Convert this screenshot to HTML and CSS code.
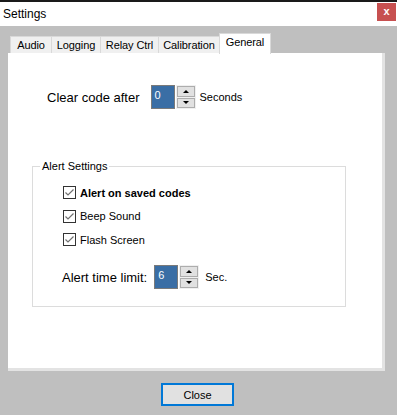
FILE: index.html
```html
<!DOCTYPE html>
<html>
<head>
<meta charset="utf-8">
<link rel="stylesheet" href="styles.css">
</head>
<body>
<div class="window">
  <div class="titlebar">
    <span class="title">Settings</span>
    <span class="close-x">x</span>
  </div>
  <div class="client">
    <div class="tabs">
      <div class="tab tab-audio">Audio</div>
      <div class="tab tab-logging">Logging</div>
      <div class="tab tab-relay">Relay Ctrl</div>
      <div class="tab tab-calib">Calibration</div>
      <div class="tab tab-general active">General</div>
    </div>
    <div class="panel">
      <div class="clear-row">
        <span class="big-label">Clear code after</span>
        <div class="spin">
          <div class="spin-edit">0</div>
          <div class="spin-btns">
            <div class="spin-btn"><span class="tri-up"></span></div>
            <div class="spin-btn"><span class="tri-down"></span></div>
          </div>
        </div>
        <span class="unit unit-seconds">Seconds</span>
      </div>
      <fieldset class="group">
        <legend class="group-title">Alert Settings</legend>
        <div class="checks">
          <label class="check-row"><span class="box"><svg width="11" height="11" viewBox="0 0 11 11"><path d="M1.5 5.5 L4 8 L9.5 2.5" fill="none" stroke="#707070" stroke-width="1.2"/></svg></span><span class="check-label bold">Alert on saved codes</span></label>
          <label class="check-row"><span class="box"><svg width="11" height="11" viewBox="0 0 11 11"><path d="M1.5 5.5 L4 8 L9.5 2.5" fill="none" stroke="#707070" stroke-width="1.2"/></svg></span><span class="check-label">Beep Sound</span></label>
          <label class="check-row"><span class="box"><svg width="11" height="11" viewBox="0 0 11 11"><path d="M1.5 5.5 L4 8 L9.5 2.5" fill="none" stroke="#707070" stroke-width="1.2"/></svg></span><span class="check-label">Flash Screen</span></label>
        </div>
        <div class="limit-row">
          <span class="big-label">Alert time limit:</span>
          <div class="spin">
            <div class="spin-edit">6</div>
            <div class="spin-btns">
              <div class="spin-btn"><span class="tri-up"></span></div>
              <div class="spin-btn"><span class="tri-down"></span></div>
            </div>
          </div>
          <span class="unit unit-sec">Sec.</span>
        </div>
      </fieldset>
    </div>
    <div class="footer">
      <button class="close-btn">Close</button>
    </div>
  </div>
</div>
</body>
</html>
```

FILE: styles.css
```css
* { box-sizing: border-box; }
html, body {
  margin: 0;
  padding: 0;
}
body {
  width: 397px;
  height: 415px;
  overflow: hidden;
  font-family: "Liberation Sans", Arial, sans-serif;
  font-size: 11px;
  color: #000;
  background: #bfbfbf;
}
.window {
  width: 397px;
  height: 415px;
  display: flex;
  flex-direction: column;
}
.titlebar {
  height: 26px;
  border-top: 2px solid #1a1a1a;
  background: #fff;
  display: flex;
  align-items: flex-start;
  justify-content: space-between;
}
.title {
  font-size: 12px;
  margin-left: 3px;
  margin-top: 5px;
}
.close-x {
  width: 19px;
  height: 18px;
  margin-top: 1px;
  margin-right: 1px;
  background: #c75050;
  color: #fff;
  font-weight: bold;
  font-size: 11px;
  line-height: 16px;
  text-align: center;
}
.client {
  flex: 1;
  display: flex;
  flex-direction: column;
  background: #bfbfbf;
}
.tabs {
  display: flex;
  align-items: flex-end;
  height: 27px;
  padding-left: 10px;
}
.tab {
  height: 17px;
  background: #f0f0f0;
  border: 1px solid #d9d9d9;
  border-bottom: none;
  border-right: none;
  line-height: 17px;
  font-size: 11px;
  text-align: center;
  white-space: nowrap;
  letter-spacing: -0.1px;
}
.tab-audio { width: 41px; }
.tab-logging { width: 49px; }
.tab-relay { width: 58px; }
.tab-calib { width: 61px; }
.tab-general { width: 52px; }
.tab.active {
  height: 21px;
  margin-bottom: -1px;
  background: #fff;
  border: 1px solid #d9d9d9;
  border-bottom: none;
  line-height: 17px;
  position: relative;
  z-index: 1;
}
.panel {
  width: 377px;
  height: 318px;
  margin-left: 8px;
  background: #fff;
  border-right: 3px solid #e3e3e3;
  border-bottom: 3px solid #e3e3e3;
  display: flex;
  flex-direction: column;
}
.clear-row {
  display: flex;
  align-items: center;
  margin-top: 32px;
  padding-left: 39px;
  height: 24px;
}
.big-label {
  font-size: 13px;
}
.clear-row .big-label { margin-right: 11px; }
.spin {
  display: flex;
  height: 24px;
}
.spin-edit {
  width: 24px;
  height: 24px;
  border: 1px solid #7a7a7a;
  background: #3a6ea5;
  color: #fff;
  font-size: 11px;
  padding: 3px 0 0 3px;
  line-height: 12px;
}
.spin-btns {
  width: 20px;
  margin-left: 1px;
  display: flex;
  flex-direction: column;
  background: #f0f0f0;
}
.spin-btn {
  flex: 1;
  border: 1px solid #adadad;
  background: #e1e1e1;
  margin: 1px 1px 0 1px;
  display: flex;
  align-items: center;
  justify-content: center;
}
.spin-btn + .spin-btn { margin-bottom: 1px; }
.tri-up {
  width: 0; height: 0;
  border-left: 3px solid transparent;
  border-right: 3px solid transparent;
  border-bottom: 3px solid #000;
}
.tri-down {
  width: 0; height: 0;
  border-left: 3px solid transparent;
  border-right: 3px solid transparent;
  border-top: 3px solid #000;
}
.unit { font-size: 11px; }
.unit-seconds { margin-left: 4px; }
.unit-sec { margin-left: 6px; }
.group {
  margin: 50px 0 0 24px;
  padding: 0 0 16px 0;
  width: 314px;
  height: 148px;
  border: 1px solid #dcdcdc;
  min-width: 0;
}
.group-title {
  margin-left: 7px;
  padding: 0 2px;
  font-size: 11px;
  line-height: 14px;
}
.checks {
  display: flex;
  flex-direction: column;
  gap: 10.5px;
  padding-left: 30px;
  margin-top: 13px;
}
.check-row {
  display: flex;
  align-items: center;
  height: 13px;
  gap: 4px;
}
.box {
  width: 13px;
  height: 13px;
  border: 1px solid #333;
  background: #fff;
  display: flex;
  align-items: center;
  justify-content: center;
}
.check-label { font-size: 11px; }
.bold { font-weight: bold; }
.limit-row {
  display: flex;
  align-items: center;
  padding-left: 29px;
  margin-top: 19px;
  height: 24px;
}
.limit-row .big-label { margin-right: 7px; }
.footer {
  display: flex;
  justify-content: center;
  padding-top: 12px;
  padding-right: 2px;
}
.close-btn {
  width: 73px;
  height: 23px;
  border: 2px solid #0078d7;
  background: #e1e1e1;
  font-family: "Liberation Sans", Arial, sans-serif;
  font-size: 11px;
  color: #000;
  padding: 0;
}
```
